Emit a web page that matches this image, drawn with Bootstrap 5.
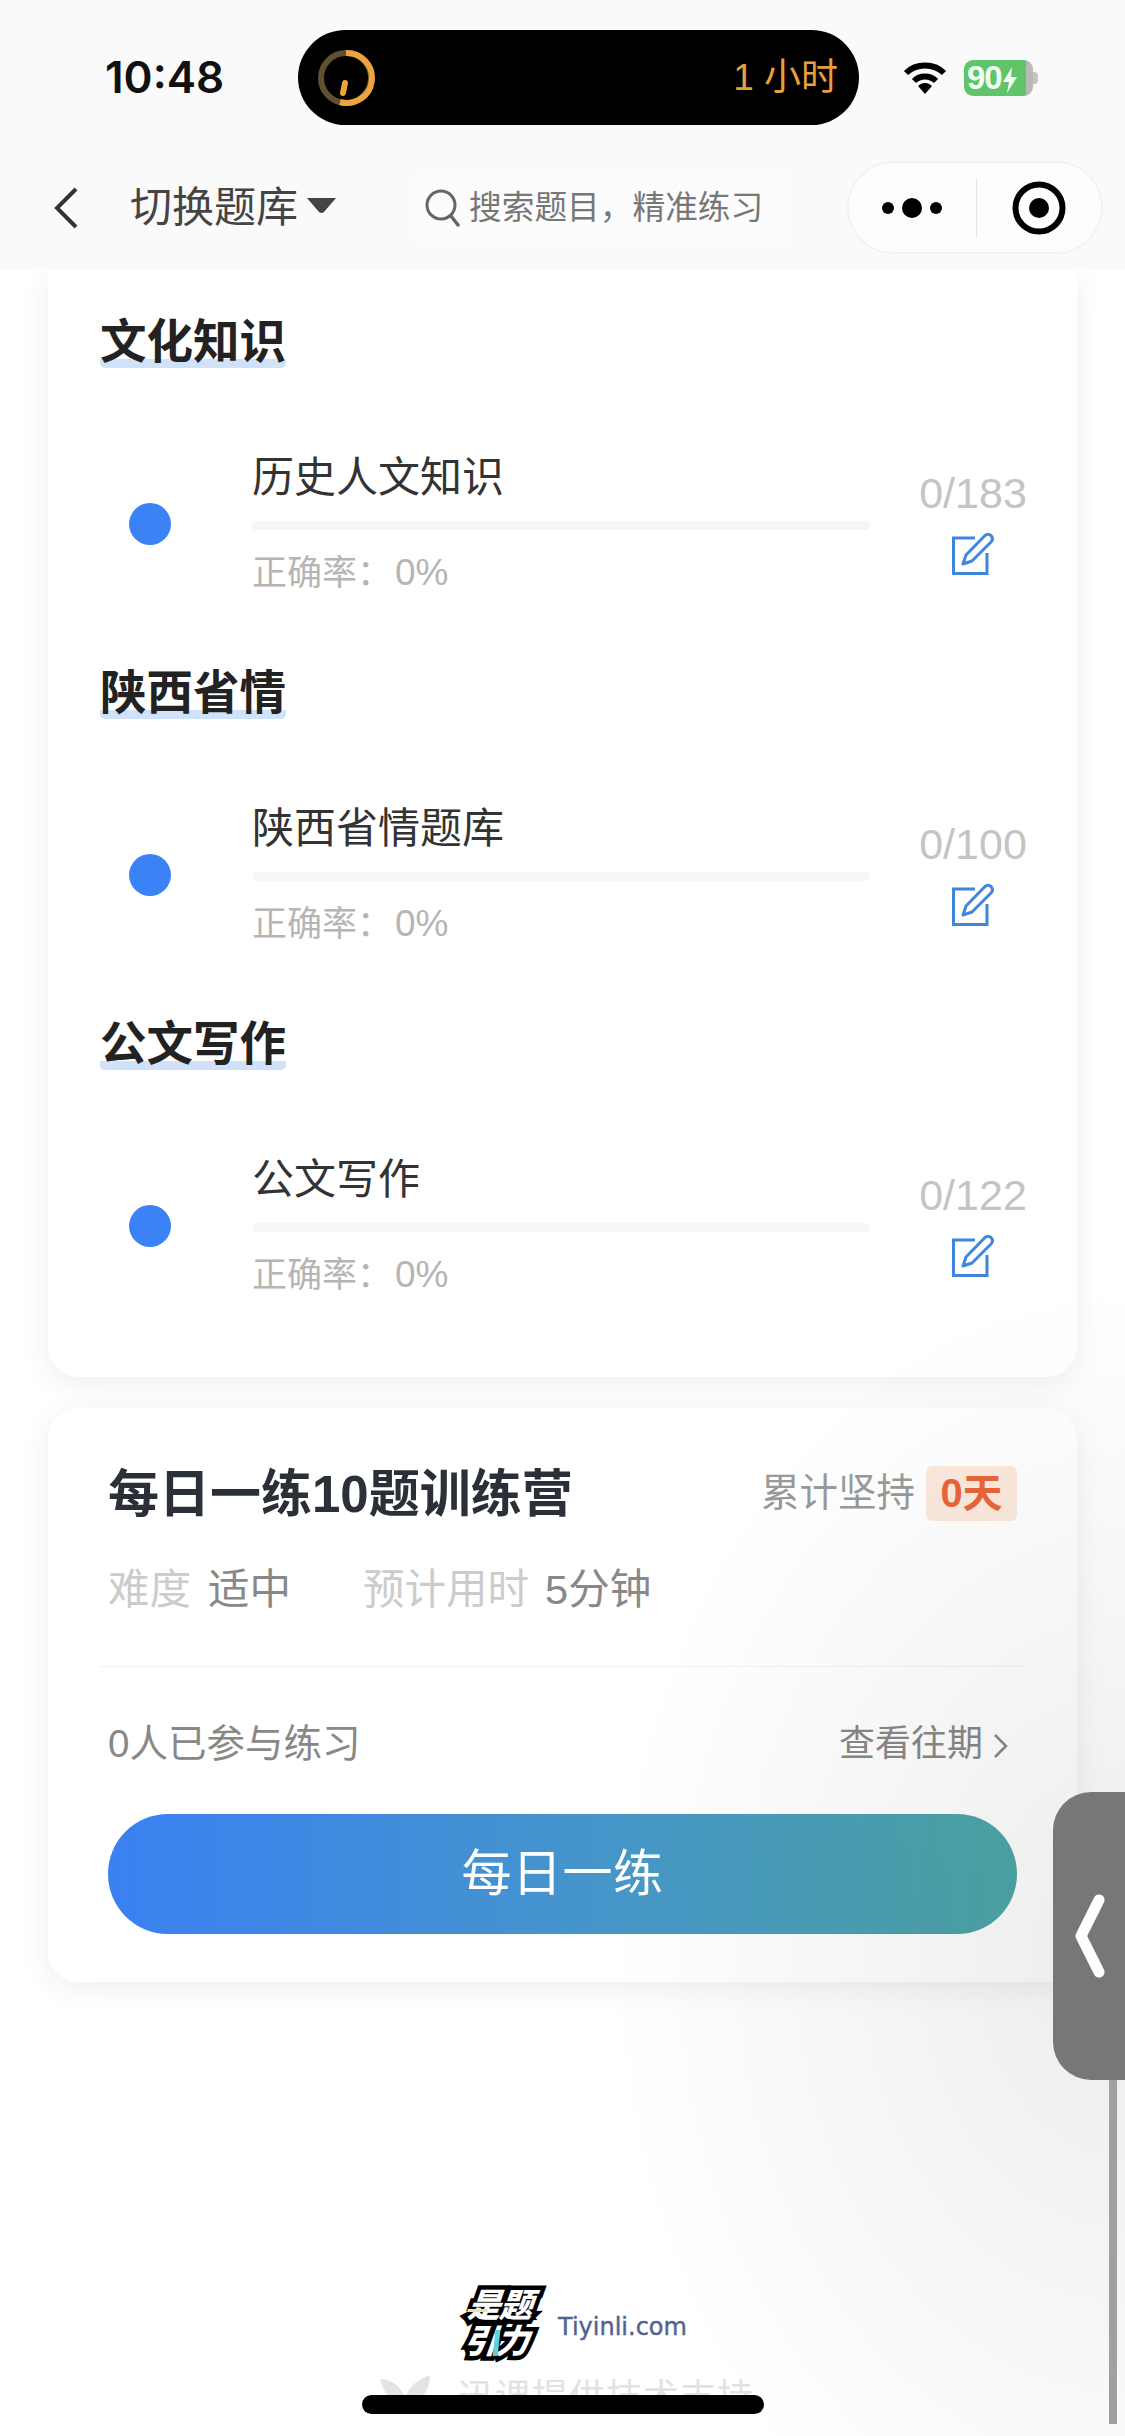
<!DOCTYPE html>
<html lang="zh-CN">
<head>
    <meta charset="UTF-8">
    <meta name="viewport" content="width=device-width, initial-scale=1.0">
    <title>切换题库</title>
    <link rel="stylesheet" href="https://cdn.jsdelivr.net/npm/bootstrap@5.3.0/dist/css/bootstrap.min.css">
    <style>
        body {
            width: 1125px;
            height: 2436px;
            overflow: hidden;
            position: relative;
            background: #fff;
            font-family: "Liberation Sans", "Noto Sans CJK SC", sans-serif;
            color: #333;
        }

        /* top area */
        .top-area { height: 270px; background: #fafafa; padding-top: 30px; position: relative; z-index: 2; }
        .status-row { height: 95px; }
        .clock { width: 298px; padding-left: 105px; font-family: Inter, "Liberation Sans", sans-serif; font-size: 44px; font-weight: 600; color: #111; line-height: 1; padding-bottom: 2px; }
        .island { width: 561px; height: 95px; background: #000; border-radius: 48px; padding: 0 21px 0 18px; }
        .island-time { font-size: 37px; color: #e9a03c; line-height: 1; }
        .wifi-icon { margin-left: 44px; }
        .batt { width: 69px; height: 36px; margin-left: 17px; border-radius: 9px; font-size: 33px; font-weight: 700; color: #f2fff2; background: linear-gradient(90deg, #5fc46a 90%, #b9b9b9 90%); padding-left: 3px; line-height: 36px; position: relative; letter-spacing: -1px; white-space: nowrap; }
        .batt::after { content: ""; position: absolute; left: 69px; top: 12px; width: 5px; height: 12px; background: #c4c4c4; border-radius: 0 4px 4px 0; }
        .nav-row { height: 95px; margin-top: 35px; }
        .back-icon { margin-left: 53px; }
        .bank-name { margin-left: 52px; font-size: 42px; line-height: 1; color: #444; }
        .caret-down { width: 29px; height: 15px; margin-left: 9px; margin-top: -4px; }
        .search-box { width: 375px; height: 80px; margin-left: 79px; background: #fcfcfc; padding-left: 10px; font-size: 32.700px; color: #777; border-radius: 8px; }
        .search-box svg { margin-right: 8px; flex: none; }
        .capsule { width: 256px; height: 93px; margin-left: 57px; background: #fdfdfd; border: 2px solid #f3f3f3; border-radius: 47px; }
        .capsule-left { width: 128px; }
        .capsule-line { width: 1px; height: 60px; background: #e6e6e6; }
        .capsule-right { width: 126px; }

        /* cards */
        .panel { width: 1029px; margin-left: 48px; background: #fff; border-radius: 30px; box-shadow: 0 6px 30px rgba(0, 0, 0, .07); }
        .panel-top { border-radius: 0 0 30px 30px; padding: 42px 0 80px 52px; }
        .sec-title { display: inline-block; height: 56px; font-size: 46.500px; line-height: 60px; font-weight: 700; color: #222; background: linear-gradient(#cfe2fa, #cfe2fa) no-repeat 0 100% / 100% 9px; border-radius: 5px; }
        .sec-body { margin-top: 85px; margin-bottom: 68px; }
        .sec-block:last-child .sec-body { margin-bottom: 0; }
        .dot-mark { width: 42px; height: 42px; margin: 50px 0 0 29px; border-radius: 50%; background: #3a82f6; flex: none; }
        .sec-main { width: 618px; margin-left: 81px; }
        .sec-name { font-size: 42px; line-height: 50px; color: #333; }
        .sec-bar { height: 9px; margin-top: 18px; background: #f6f6f6; border-radius: 5px; }
        .sec-rate { font-size: 35px; line-height: 44px; margin-top: 21px; color: #b5b5b5; }
        .rate-val { font-size: 37px; margin-left: 3px; }
        .sec-side { width: 110px; margin-left: 48px; padding-top: 15px; text-align: center; }
        .sec-count { font-size: 43px; line-height: 50px; color: #c4c4c4; }
        .sec-side svg { display: block; margin: 14px auto 0; }

        .panel-daily { margin-top: 31px; padding: 56px 60px 48px; }
        .daily-title { font-size: 51px; font-weight: 700; line-height: 55px; color: #2b2f38; padding-top: 3px; }
        .keep-text { font-size: 38.500px; color: #999; }
        .keep-badge { width: 91px; height: 55px; margin-left: 11px; background: #fbe9dd; border-radius: 6px; font-size: 40px; font-weight: 700; color: #e8663a; }
        .daily-meta { margin-top: 43px; font-size: 41.500px; line-height: 50px; color: #888; }
        .meta-key { color: #ccc; margin-right: 17px; }
        .meta-gap { margin-left: 72px; }
        .meta-gap .meta-key { margin-right: 16px; }
        .daily-line { height: 1px; margin: 51px -8px 0; background: #f1f1f1; }
        .daily-foot { margin-top: 52px; line-height: 50px; }
        .joined { font-size: 38.500px; color: #888; }
        .history { font-size: 36px; color: #888; margin-right: 8px; }
        .history svg { margin-left: 10px; }
        .practice-btn { display: block; width: 909px; height: 120px; margin-top: 45px; border: 0; border-radius: 60px; background: linear-gradient(90deg, #3a80f2, #4fa8a8); color: #fff; font-size: 50px; letter-spacing: .5px; }

        /* footer */
        .foot-brand { margin-top: 306px; margin-left: 456px; }
        .brand-logo { position: relative; width: 84px; height: 73px; font-size: 33px; line-height: 36px; font-weight: 900; font-style: italic; color: #fff; -webkit-text-stroke: 9px #000; paint-order: stroke fill; transform: skewX(-6deg); text-align: center; }
        .brand-logo div { letter-spacing: -1px; }
        .brand-logo::before { content: ""; position: absolute; left: 10px; top: 21px; width: 20px; height: 3px; background: #efe39a; }
        .brand-logo::after { content: ""; position: absolute; left: 40px; top: 42px; width: 5px; height: 26px; background: #5fd0dc; }
        .brand-site { margin-left: 18px; margin-top: 5px; font-family: "DejaVu Sans", sans-serif; font-size: 24px; -webkit-text-stroke: .4px #53628f; color: #53628f; }
        .foot-support { margin-top: 14px; margin-left: 378px; font-size: 36px; line-height: 46px; color: #e2e2e2; letter-spacing: 1px; }
        .foot-support svg { margin-right: 26px; }

        /* overlays */
        .side-shade { position: absolute; left: 0; top: 0; width: 1125px; height: 2436px; pointer-events: none; background: radial-gradient(ellipse 520px 680px at 1125px 1960px, rgba(0, 0, 0, .075), rgba(0, 0, 0, 0) 100%); z-index: 3; }
        .side-handle { position: absolute; left: 1053px; top: 1792px; width: 80px; height: 288px; background: #777; border-radius: 38px 0 0 38px; z-index: 5; }
        .side-handle svg { position: absolute; left: 20px; top: 102px; }
        .side-rod { position: absolute; left: 1109px; top: 2080px; width: 8px; height: 344px; background: #a0a0a0; z-index: 4; }
        .home-bar { position: absolute; left: 362px; top: 2395px; width: 402px; height: 19px; background: #000; border-radius: 10px; z-index: 6; }
    </style>
</head>
<body>
    <div class="top-area">
        <div class="status-row d-flex align-items-center">
            <div class="clock">10:48</div>
            <div class="island d-flex align-items-center justify-content-between">
                <svg width="60" height="60" viewBox="0 0 60 60">
                    <circle cx="30" cy="30" r="25" fill="none" stroke="#5f5130" stroke-width="6"/>
                    <path d="M30 5 A25 25 0 1 1 24 54" fill="none" stroke="#eea43c" stroke-width="6"/>
                    <path d="M29 35 L27 45" stroke="#eea43c" stroke-width="6" stroke-linecap="round"/>
                </svg>
                <div class="island-time">1 小时</div>
            </div>
            <svg class="wifi-icon" width="44" height="34" viewBox="0 0 44 34">
                <path d="M3 12 C13 2 31 2 41 12" fill="none" stroke="#000" stroke-width="6"/>
                <path d="M11 20 C17 14 27 14 33 20" fill="none" stroke="#000" stroke-width="6"/>
                <path d="M15 25 C19 21 25 21 29 25 L22 33 Z" fill="#000"/>
            </svg>
            <div class="batt">90<svg width="16" height="28" viewBox="0 0 16 28"><path d="M10 1 L1 16 H7 L5 27 L15 11 H9 Z" fill="#f2fff2"/></svg></div>
        </div>
        <div class="nav-row d-flex align-items-center">
            <svg class="back-icon" width="25" height="42" viewBox="0 0 25 42"><path d="M23 2 L4 21 L23 40" fill="none" stroke="#333" stroke-width="4"/></svg>
            <div class="bank-name">切换题库</div>
            <svg class="caret-down" viewBox="0 0 29 15"><path d="M0 0 H29 L17 14 Q14.500 16 12 14 Z" fill="#444"/></svg>
            <div class="search-box d-flex align-items-center">
                <svg width="36" height="38" viewBox="0 0 36 38"><circle cx="16" cy="16" r="14" fill="none" stroke="#666" stroke-width="3"/><path d="M26 27 L33 36" stroke="#666" stroke-width="3.500" stroke-linecap="round"/></svg>
                <span>搜索题目，精准练习</span>
            </div>
            <div class="capsule d-flex align-items-center">
                <div class="capsule-left d-flex justify-content-center">
                    <svg width="62" height="24" viewBox="0 0 62 24"><circle cx="7" cy="12" r="6" fill="#000"/><circle cx="31" cy="12" r="10" fill="#000"/><circle cx="55" cy="12" r="6" fill="#000"/></svg>
                </div>
                <div class="capsule-line"></div>
                <div class="capsule-right d-flex justify-content-center">
                    <svg width="54" height="54" viewBox="0 0 54 54"><circle cx="27" cy="27" r="23.500" fill="none" stroke="#000" stroke-width="6"/><circle cx="27" cy="27" r="10" fill="#000"/></svg>
                </div>
            </div>
        </div>
    </div>

    <div class="panel panel-top">
        <div class="sec-block">
            <div class="sec-title">文化知识</div>
            <div class="sec-body d-flex">
                <div class="dot-mark"></div>
                <div class="sec-main">
                    <div class="sec-name">历史人文知识</div>
                    <div class="sec-bar"></div>
                    <div class="sec-rate">正确率：<span class="rate-val">0%</span></div>
                </div>
                <div class="sec-side">
                    <div class="sec-count">0/183</div>
                    <svg width="44" height="44" viewBox="0 0 44 44"><path d="M24 6 H2.500 V41.500 H36 V21" fill="none" stroke="#3f86dc" stroke-width="3"/><path d="M12 32 L15 23 L34 3.500 Q37 1 40 3.500 Q43 7 40 10 L21 29 Z" fill="none" stroke="#3f86dc" stroke-width="3" stroke-linejoin="round"/></svg>
                </div>
            </div>
        </div>
        <div class="sec-block">
            <div class="sec-title">陕西省情</div>
            <div class="sec-body d-flex">
                <div class="dot-mark"></div>
                <div class="sec-main">
                    <div class="sec-name">陕西省情题库</div>
                    <div class="sec-bar"></div>
                    <div class="sec-rate">正确率：<span class="rate-val">0%</span></div>
                </div>
                <div class="sec-side">
                    <div class="sec-count">0/100</div>
                    <svg width="44" height="44" viewBox="0 0 44 44"><path d="M24 6 H2.500 V41.500 H36 V21" fill="none" stroke="#3f86dc" stroke-width="3"/><path d="M12 32 L15 23 L34 3.500 Q37 1 40 3.500 Q43 7 40 10 L21 29 Z" fill="none" stroke="#3f86dc" stroke-width="3" stroke-linejoin="round"/></svg>
                </div>
            </div>
        </div>
        <div class="sec-block">
            <div class="sec-title">公文写作</div>
            <div class="sec-body d-flex">
                <div class="dot-mark"></div>
                <div class="sec-main">
                    <div class="sec-name">公文写作</div>
                    <div class="sec-bar"></div>
                    <div class="sec-rate">正确率：<span class="rate-val">0%</span></div>
                </div>
                <div class="sec-side">
                    <div class="sec-count">0/122</div>
                    <svg width="44" height="44" viewBox="0 0 44 44"><path d="M24 6 H2.500 V41.500 H36 V21" fill="none" stroke="#3f86dc" stroke-width="3"/><path d="M12 32 L15 23 L34 3.500 Q37 1 40 3.500 Q43 7 40 10 L21 29 Z" fill="none" stroke="#3f86dc" stroke-width="3" stroke-linejoin="round"/></svg>
                </div>
            </div>
        </div>
    </div>

    <div class="panel panel-daily">
        <div class="d-flex align-items-center justify-content-between">
            <div class="daily-title">每日一练10题训练营</div>
            <div class="d-flex align-items-center">
                <span class="keep-text">累计坚持</span>
                <span class="keep-badge d-flex align-items-center justify-content-center">0天</span>
            </div>
        </div>
        <div class="daily-meta d-flex">
            <div><span class="meta-key">难度</span>适中</div>
            <div class="meta-gap"><span class="meta-key">预计用时</span>5分钟</div>
        </div>
        <div class="daily-line"></div>
        <div class="daily-foot d-flex align-items-center justify-content-between">
            <span class="joined">0人已参与练习</span>
            <span class="history">查看往期<svg width="16" height="26" viewBox="0 0 16 26"><path d="M2 2 L13 13 L2 24" fill="none" stroke="#888" stroke-width="2.500"/></svg></span>
        </div>
        <button class="practice-btn" type="button">每日一练</button>
    </div>

    <div class="foot-brand d-flex align-items-center">
        <div class="brand-logo">
            <div>是题</div>
            <div>引力</div>
        </div>
        <div class="brand-site">Tiyinli.com</div>
    </div>
    <div class="foot-support d-flex align-items-center">
        <svg width="54" height="46" viewBox="0 0 54 46"><path d="M2 4 C14 4 24 12 27 24 C30 12 40 4 52 0 C52 16 42 28 27 30 C14 30 6 18 2 4 Z M18 34 Q28 30 38 34 Q28 42 18 34 Z" fill="#e4e4e4"/></svg>
        <span>迅课提供技术支持</span>
    </div>

    <div class="side-shade"></div>
    <div class="side-handle">
        <svg width="36" height="84" viewBox="0 0 36 84"><path d="M26 6 L8 42 L26 78" fill="none" stroke="#fff" stroke-width="11" stroke-linecap="round" stroke-linejoin="round"/></svg>
    </div>
    <div class="side-rod"></div>
    <div class="home-bar"></div>
</body>
</html>
